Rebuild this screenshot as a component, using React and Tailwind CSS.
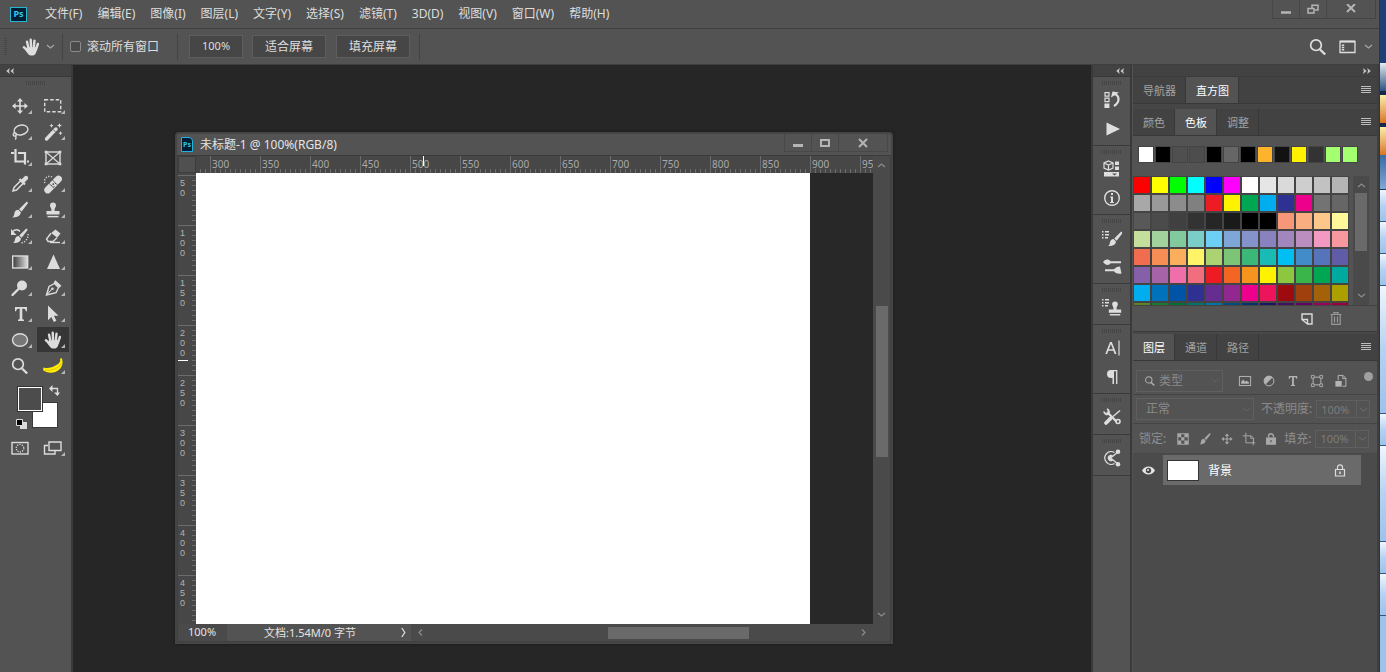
import React from "react";

const MENUS = ["文件(F)", "编辑(E)", "图像(I)", "图层(L)", "文字(Y)", "选择(S)", "滤镜(T)", "3D(D)", "视图(V)", "窗口(W)", "帮助(H)"];

const RECENT = ["#ffffff", "#000000", "#4f4f4f", "#4d4d4d", "#000000", "#666666", "#000000", "#fdb32b", "#121212", "#fff200", "#333333", "#a3ff70", "#a3ff70"];

const SWATCHES = [
  "ff0000 ffff00 00ff00 00ffff 0000ff ff00ff ffffff e6e6e6 dadada cecece c2c2c2 b5b5b5",
  "a8a8a8 999999 8c8c8c 808080 ed1c24 fff200 00a651 00aeef 2e3192 ec008c 737373 666666",
  "585858 4b4b4b 404040 333333 262626 1a1a1a 000000 000000 f7977a f9ad81 fdc68a fff79a",
  "c4df9b a2d39c 82ca9d 7bcdc8 6ecff6 7ea7d8 8493ca 8882be a187be bc8dbf f49ac2 f6989d",
  "f26c4f f68e55 fbaf5c fff467 acd372 7cc576 3bb878 1abbb4 00bff3 438cca 5574b9 605ca8",
  "855fa8 a763a8 f06ea9 f26d7d ed1c24 f26522 f7941d fff200 8dc73f 39b54a 00a651 00a99d",
  "00aeef 0072bc 0054a6 2e3192 662d91 92278f ec008c ed145b 9e0b0f a0410d a36209 aba000",
  "598527 1a7b30 007236 00746b 0076a3 004b80 003471 1b1464 440e62 630460 9e005d 9e0039",
].flatMap((row) => row.split(" ").map((c) => "#" + c));

const TOP_LABELS = ["300", "350", "400", "450", "500", "550", "600", "650", "700", "750", "800", "850", "900", "950"];
const SIDE_LABELS = ["50", "100", "150", "200", "250", "300", "350", "400", "450"];

function Icon({ children, size = 20, className = "" }) {
  return (
    <svg viewBox="0 0 20 20" width={size} height={size} fill="none" stroke="currentColor" strokeWidth="1.4" className={"shrink-0 " + className} aria-hidden="true">
      {children}
    </svg>
  );
}

const solid = { fill: "currentColor", stroke: "none" };

const Hand = () => (
  <>
    <g strokeWidth="2.4" strokeLinecap="round">
      <path d="M2.8 10.200l3.700 3.300" />
      <path d="M6 4.600l1.500 7" />
      <path d="M9.700 2.600l.4 8" />
      <path d="M13.500 3.700l-.7 7" />
      <path d="M16.900 7l-1.900 5.500" />
    </g>
    <path {...solid} d="M6 10.200h9.700l.3 2.200c-.6 2.800-1.600 5.700-3.800 6H9.500c-2-.3-3.200-2.600-5-5z" />
  </>
);

const Brush = () => (
  <>
    <path {...solid} d="M17.6 2.2c.5.5.4 1 0 1.6l-6 7.8-2.6-2.4 7-7c.5-.4 1.1-.5 1.600 0z" />
    <path {...solid} d="M8.200 9.800l2.500 2.300c.3 3-2.500 5.600-8.500 5.400 2-1 1.700-2.600 2.300-4.700.5-1.800 1.900-3 3.700-3z" />
  </>
);

const Stamp = () => (
  <>
    <path {...solid} d="M10 2.500a3 3 0 0 1 3 3c0 1.700-1.400 2.500-1.400 4.200v1.300h4.900v3.500h-13V11h4.900V9.700C8.400 8 7 7.200 7 5.500a3 3 0 0 1 3-3z" />
    <path d="M4.500 16.600h11" strokeWidth="1.500" />
  </>
);

const Move = () => (
  <>
    <path d="M10 4v12M4 10h12" strokeWidth="1.600" />
    <path {...solid} d="M10 2l3 3.600H7zM10 18l3-3.600H7zM2 10l3.600-3v6zM18 10l-3.600-3v6z" />
  </>
);

const Search = () => (
  <>
    <circle cx="8" cy="8.200" r="5.300" strokeWidth="1.700" />
    <path d="M12 12.500l5.200 5" strokeWidth="2.400" />
  </>
);

const Type = () => <path {...solid} d="M4 3h12v4.200h-1.100c-.3-1.700-.9-2.500-2.300-2.500h-1.300v9.900c0 .8.5 1 1.700 1.100V17H7v-1.300c1.200-.1 1.700-.3 1.700-1.100V4.700H7.400c-1.400 0-2 .8-2.300 2.500H4z" />;

const TOOLS = [
  ["移动", <Move />],
  ["选框", <rect x="1.700" y="3.700" width="16" height="12" strokeDasharray="3.500 2" />],
  ["套索", <><ellipse cx="11" cy="8" rx="7" ry="4.800" transform="rotate(-12 11 8)" /><circle cx="4.800" cy="12.500" r="1.600" /><path d="M4.800 13.500c1.500 1 1.600 2.700.4 4" /></>],
  ["魔棒", <><path d="M3.500 17L13 7" strokeWidth="3.400" strokeLinecap="round" /><path d="M10.300 7.700l2 2" stroke="#535353" strokeWidth="1" /><path {...solid} d="M8.500 1.500l.6 1.600 1.600.6-1.600.6-.6 1.600-.6-1.600-1.600-.6 1.600-.6zM16.500 1l.7 1.800 1.800.7-1.800.7-.7 1.800-.7-1.800-1.800-.7 1.800-.7zM17.500 9l.6 1.600 1.600.6-1.600.6-.6 1.700-.6-1.700-1.600-.6 1.600-.6z" /></>],
  ["裁剪", <><path d="M5.500 1v12.500H16M8 5h7v11.500" strokeWidth="2.200" /><path d="M1 5h3M17 13.500h2" strokeWidth="2.200" /></>],
  ["画框", <><rect x="3" y="4" width="14" height="12" /><path d="M3 4l14 12M17 4L3 16" strokeWidth="1.100" /><path {...solid} d="M1.700 2.700h2.600v2.600H1.700zM15.700 2.700h2.600v2.600h-2.600zM1.700 14.700h2.600v2.600H1.700zM15.700 14.700h2.600v2.600h-2.600z" /></>],
  ["吸管", <><path d="M11.500 6L4 13.500 3 17l3.500-1L14 8.500" strokeWidth="1.500" /><path d="M9.500 5l5.500 5.500" strokeWidth="2.200" /><path d="M13 7l3-3" strokeWidth="4.200" strokeLinecap="round" /></>],
  ["修复画笔", <><path d="M4.700 16L15.500 5" strokeWidth="6.800" strokeLinecap="round" /><path stroke="#535353" strokeWidth=".9" d="M5.500 8.800l6 6M9 5.600l6 6" /><path fill="#535353" stroke="none" d="M9.500 9.300h1.600v1.600H9.500zM12 9h1v1h-1zM8 11h1v1H8zM10.500 12h1v1h-1z" /><path d="M1.800 9A5 5 0 0 1 9 3" strokeDasharray="1.200 1.500" /></>],
  ["画笔", <Brush />],
  ["仿制图章", <Stamp />],
  ["历史记录画笔", <><g transform="translate(1 1) scale(.92)"><Brush /></g><path d="M2.500 5.500c3-2.500 6-2 7.500 0" /><path {...solid} d="M1 3v6h5.500z" /><path d="M18 8c.5 4-2 8-7 9" strokeDasharray="1.200 1.500" /></>],
  ["橡皮擦", <><path {...solid} d="M12.500 3.500l5 4-3.300 4.300-6-4.800z" /><path d="M8 7.200L3.500 13l1.600 2.500h5L14 11.800" /><path d="M7 16.500h10" /></>],
  ["渐变", <><defs><linearGradient id="ramp"><stop offset="0" stopColor="#3a3a3a" /><stop offset="1" stopColor="#e0e0e0" /></linearGradient></defs><rect x="2.700" y="4" width="15" height="12" fill="url(#ramp)" /></>],
  ["锐化", <path {...solid} d="M10.500 2.500L17 17H4z" />],
  ["减淡", <><circle cx="12" cy="7.500" r="5" fill="currentColor" stroke="none" /><path d="M8.500 11L2.500 17" strokeWidth="2.400" strokeLinecap="round" /></>],
  ["钢笔", <><path d="M3.500 17L6 8.500l5.500-3 4 4-2.500 5.200z" /><path d="M3.500 17l5-5.500" strokeWidth="1.100" /><circle cx="9.400" cy="10.800" r="1.300" fill="currentColor" stroke="none" /><path d="M11.500 3.200l6 5.600" strokeWidth="2.600" /></>],
  ["文字", <g transform="translate(1 0)"><Type /></g>],
  ["选择", <path {...solid} d="M5 1.500l10.500 10.300h-4.600l2.500 5-2.600 1.300-2.400-5L5 16.300z" />],
  ["椭圆", <ellipse cx="10" cy="10" rx="7.500" ry="6.300" fill="#777" />],
  ["抓手", <Hand />],
  ["缩放", <Search />],
  ["香蕉", <><path fill="#ffee00" stroke="none" d="M17 2.500l2-.2.600 4.200c-.6 6.200-5.200 10-11.600 10.200-3 .1-6-.9-8-2.700l.5-2.500c2.200.8 5.200.8 8.200-.2C12.500 10 16.800 7.500 17.300 4.500z" /><path stroke="#c9a800" strokeWidth=".6" d="M2 14c6 1.200 13-1 16.500-7" /></>],
];

function Tool({ name, children, active, plain }) {
  return (
    <button aria-label={name} className={"relative flex h-[25px] items-center justify-center text-[#dcdcdc] " + (active ? "bg-[#363636]" : "")}>
      <Icon>{children}</Icon>
      {!plain && (
        <svg className="absolute right-1 bottom-1" width="4" height="4" aria-hidden="true">
          <path d="M4 0v4H0z" fill="#b8b8b8" />
        </svg>
      )}
    </button>
  );
}

function Grip() {
  return <div className="mx-auto h-[4px] w-[20px] bg-[repeating-linear-gradient(90deg,#454545_0px,#454545_1px,transparent_1px,transparent_2px)]" />;
}

function DoubleArrow({ right }) {
  return (
    <svg width="8" height="6" viewBox="0 0 8 6" fill="#c8c8c8" aria-hidden="true">
      {right ? <path d="M0 0l3.600 3L0 6l.8-3zM4.200 0l3.600 3-3.600 3 .8-3z" /> : <path d="M3.800 0L.2 3l3.600 3L3 3zM8 0L4.400 3 8 6l-.8-3z" />}
    </svg>
  );
}

function Chevron({ dir = "down", className = "" }) {
  const d = { down: "M1 3l3.500 3L8 3", up: "M1 6l3.500-3L8 6", left: "M6 1.500L3 4.500l3 3", right: "M3 1.500l3 3-3 3" }[dir];
  return (
    <svg width="9" height="9" viewBox="0 0 9 9" fill="none" stroke="currentColor" strokeWidth="1.200" className={"shrink-0 " + className} aria-hidden="true">
      <path d={d} />
    </svg>
  );
}

function Tabs({ items, active }) {
  return (
    <div className="flex h-[27px] shrink-0 items-stretch border-b border-[#383838] bg-[#424242]" role="tablist">
      {items.map((t, i) => (
        <button key={t} role="tab" aria-selected={i === active} className={"border-r border-[#383838] pt-[2px] pr-[9px] pl-[10px] text-[11px] " + (i === active ? "bg-[#535353] text-white" : "text-[#a3a3a3]")}>
          {t}
        </button>
      ))}
      <button aria-label="面板菜单" className="mr-[6px] ml-auto">
        <svg width="10" height="8" fill="#bdbdbd" aria-hidden="true">
          <path d="M0 0h10v1H0zM0 2h10v1H0zM0 4h10v1H0zM0 6h10v1H0z" />
        </svg>
      </button>
    </div>
  );
}

const DOCK = [
  [
    ["历史记录", <><path strokeWidth="1.200" d="M3 2.600h4v3.500H3zM3 8.200h4v3.500H3z" /><path {...solid} d="M2.400 13.500h5v4.500h-5z" /><path d="M12 4c5.500 1 6.500 8 0 12" strokeWidth="2.200" /><path {...solid} d="M9 7.500L10.500 1.500l6.500 1z" /></>],
    ["动作", <path {...solid} d="M4.500 3.500L18 10 4.500 16.500z" />],
  ],
  [
    ["3D", <><path strokeWidth="1.200" d="M6.500 2l4.500 2v5l-4.500 2L2 9V4zM2 4l4.500 2L11 4M6.500 6v5" /><path {...solid} d="M13 2.500h4v3.500h-4zM13 7.500h4V11h-4zM2 13h15v4.500H2z" /><path d="M10 14.500h5l-2.500 2z" fill="#535353" stroke="none" /></>],
    ["信息", <><circle cx="10" cy="10" r="7.300" /><path {...solid} d="M9 5h2v2H9zM8 8.500h3V14h1v1H8v-1h1V9.500H8z" /></>],
  ],
  [
    ["画笔设置", <><g transform="translate(4 2) scale(.92)"><Brush /></g><path {...solid} d="M0 3h1.500v1.500H0zM3 3h4v1.500H3zM0 6h1.500v1.500H0zM3 6h4v1.500H3zM0 9h1.500v1.500H0zM3 9h3v1.500H3z" /></>],
    ["画笔", <><path {...solid} d="M1 5C3.500 1.500 7 2 8.500 4.200H19v2H8.500C7 8.800 3.500 8.500 1 5z" /><path {...solid} d="M3 12.200h9c2-2 4-2.700 6-2.700l1.500 7c-3 .5-5.500 0-7.500-2.300H3z" /></>],
  ],
  [["仿制源", <><g transform="translate(3.500 2) scale(.95)"><Stamp /></g><path {...solid} d="M0 2h1.500v1.500H0zM3 2h4v1.500H3zM0 5h1.500v1.500H0zM3 5h4v1.500H3zM0 8h1.500v1.500H0zM3 8h3v1.500H3z" /></>]],
  [
    ["字符", <><path {...solid} d="M8 4h1.800l4.700 12h-1.900l-1.200-3.200H6.300L5.100 16H3.300zm.9 2L6.900 11.300h4z" /><path d="M17 2.500v15" strokeWidth="1.200" /></>],
    ["段落", <><path {...solid} d="M9 3h3v14h-1.500v-6H9a4 4 0 0 1 0-8z" /><path d="M14.700 17V3M9 3.600h6.400" strokeWidth="1.300" /></>],
  ],
  [["工具预设", <><path d="M5 5l9.500 9.500" strokeWidth="2.300" /><path d="M2 4.500A3.200 3.200 0 0 0 6.500 7 3.200 3.200 0 0 0 5 2.200" strokeWidth="1.800" /><circle cx="16" cy="14.500" r="2" strokeWidth="1.600" /><path d="M18 3.500l-7 6" strokeWidth="1.500" /><path d="M8.500 11.500L4 16" strokeWidth="3.800" strokeLinecap="round" /></>]],
  [["学习", <><path d="M12.500 4.500A6.400 6.400 0 1 0 12.500 15.500" /><path {...solid} d="M11 7.500a3.200 3.200 0 1 0 0 5L8.500 10z" /><path d="M8.500 10L16 4M8.500 10L16 16" /><circle cx="16" cy="3.700" r="2.300" {...solid} /><circle cx="16" cy="16.300" r="2.300" {...solid} /></>]],
];

function Caption({ label, children, wide }) {
  return (
    <button aria-label={label} className={"flex h-full items-center justify-center border-l border-[#484848] text-[#b5b5b5] " + (wide ? "w-[49px]" : "w-[27px]")}>
      <svg width="12" height="10" viewBox="0 0 12 10" fill="none" stroke="currentColor" strokeWidth="2" aria-hidden="true">
        {children}
      </svg>
    </button>
  );
}

function PsBadge({ doc }) {
  return (
    <span className={"flex shrink-0 items-center justify-center border bg-[#001d33] font-bold text-[#31c5f0] " + (doc ? "h-[15px] w-[12px] rounded-tr-sm border-[#20b4df] text-[7px]" : "h-[15px] w-[17px] border-[#2ab5cf] text-[9px]")}>
      Ps
    </span>
  );
}

function DocumentWindow() {
  return (
    <section className="absolute top-[67px] left-[102px] flex h-[512px] w-[718px] flex-col rounded-t-sm border-2 border-[#454545] bg-[#535353] shadow-[0_0_3px_#1a1a1a]">
      <header className="flex h-[22px] shrink-0 items-center border-b border-[#3a3a3a] pl-[4px]">
        <PsBadge doc />
        <h1 className="ml-[7px] text-xs text-[#e4e4e4]">未标题-1 @ 100%(RGB/8)</h1>
        <div className="mr-[3px] ml-auto flex h-[18px] self-start border-r border-b border-[#484848]">
          <Caption label="最小化"><path d="M1 7.500h10" strokeWidth="3" /></Caption>
          <Caption label="最大化"><path d="M2 2h8v6H2z" /></Caption>
          <Caption label="关闭" wide><path d="M2 1l8 8M10 1L2 9" /></Caption>
        </div>
      </header>

      <div className="flex min-h-0 flex-1 border-x border-[#404040]">
        <div className="flex min-w-0 flex-1 flex-col">
          <div className="flex h-[17px] shrink-0 bg-[#474747]">
            <div className="w-[18px] shrink-0 border border-[#3d3d3d] bg-[#505050]" />
            <div className="relative flex min-w-0 flex-1 overflow-hidden text-[10px] leading-[17px] text-[#a9a9a9]">
              <div className="w-[14px] shrink-0 bg-[repeating-linear-gradient(270deg,transparent_0px,transparent_4px,#6c6c6c_4px,#6c6c6c_5px)] bg-[length:100%_4px] bg-bottom bg-no-repeat" />
              {TOP_LABELS.map((n) => (
                <div key={n} className="w-[50px] shrink-0 border-l border-[#6c6c6c] bg-[repeating-linear-gradient(90deg,transparent_0px,transparent_4px,#6c6c6c_4px,#6c6c6c_5px)] bg-[length:100%_4px] bg-bottom bg-no-repeat pl-px">
                  {n}
                </div>
              ))}
              <div className="absolute top-0 left-[227px] h-[10px] w-px bg-white" />
            </div>
          </div>
          <div className="flex min-h-0 flex-1">
            <div className="relative w-[18px] shrink-0 overflow-hidden bg-[#474747] font-['Liberation_Sans',sans-serif] text-[9px] leading-[10px] text-[#b4b4b4]">
              <div className="h-[2px]" />
              {SIDE_LABELS.map((n) => (
                <div key={n} className="flex h-[50px] w-full flex-col border-t border-[#6c6c6c] bg-[repeating-linear-gradient(180deg,transparent_0px,transparent_4px,#6c6c6c_4px,#6c6c6c_5px)] bg-[length:4px_100%] bg-right bg-no-repeat pt-[2px] pl-[2px]">
                  {n.split("").map((d, i) => (
                    <span key={i}>{d}</span>
                  ))}
                </div>
              ))}
              <div className="absolute top-[187px] left-0 h-px w-[10px] bg-white" />
            </div>
            <div className="flex min-w-0 flex-1 bg-[#282828]">
              <div className="w-[614px] bg-white" />
            </div>
          </div>
        </div>
        <div className="flex w-[17px] shrink-0 flex-col items-center bg-[#4a4a4a] pt-[5px] pb-[5px] text-[#8c8c8c]">
          <Chevron dir="up" />
          <div className="mt-[136px] h-[151px] w-[12px] bg-[#6a6a6a]" />
          <Chevron className="mt-auto" />
        </div>
      </div>

      <footer className="flex h-[18px] shrink-0 items-center border-x border-b border-[#404040] bg-[#4a4a4a] text-[11px] text-[#e4e4e4]">
        <span className="w-[49px] pl-[10px]">100%</span>
        <button className="flex h-full w-[184px] items-center bg-[#535353] pr-[5px] pl-[37px]">
          <span className="leading-4">文档:1.54M/0 字节</span>
          <svg className="ml-auto" width="5" height="11" fill="none" stroke="#dcdcdc" strokeWidth="1.300" aria-hidden="true"><path d="M.8 1l3 4.500-3 4.500" /></svg>
        </button>
        <div className="flex h-full flex-1 items-center pl-[5px] text-[#8c8c8c]">
          <Chevron dir="left" />
          <div className="ml-[183px] h-[12px] w-[141px] bg-[#6a6a6a]" />
          <Chevron dir="right" className="mr-[22px] ml-auto" />
        </div>
      </footer>
    </section>
  );
}

function PercentField({ id, label }) {
  return (
    <>
      <label htmlFor={id} className="shrink-0">{label}</label>
      <div className="ml-[4px] flex h-[18px] items-center border border-[#5f5f5f]">
        <input id={id} defaultValue="100%" className="h-full w-[39px] bg-transparent pl-[4px] text-[11px] text-[#7c7c7c] outline-none" />
        <button aria-label="调整数值" className="flex h-full w-[13px] items-center justify-center border-l border-[#5f5f5f] text-[#666]">
          <Chevron />
        </button>
      </div>
    </>
  );
}

const FILTERS = [
  ["像素", <><rect x="2" y="3.500" width="16" height="13" /><path {...solid} d="M4.500 14V11l3-3 2.500 3 2-1.500 3.500 2V14z" /></>],
  ["调整图层", <><circle cx="10" cy="10" r="7" /><path {...solid} d="M15 5L5 15a7 7 0 0 1 0-10 7 7 0 0 1 10 0z" /></>],
  ["文字图层", <Type />],
  ["形状", <><path d="M4.500 4.500h11v11h-11z" /><path fill="#535353" strokeWidth="1.200" d="M2 2h4v4H2zM14 2h4v4h-4zM2 14h4v4H2zM14 14h4v4h-4z" /></>],
  ["智能对象", <><path d="M6 9V2h7l4 4v11.500h-5M12.500 2v4.500H17" /><path {...solid} d="M2 10h9v8H2z" /></>],
];

const LOCKS = [
  ["锁定透明像素", <><rect x="2.500" y="2.500" width="15" height="15" /><path {...solid} d="M3 3h4.500v4.500H3zM12 3h5v4.500h-5zM7.500 7.500H12V12H7.500zM3 12h4.500v5H3zM12 12h5v5h-5z" /></>],
  ["锁定图像像素", <Brush />],
  ["锁定位置", <Move />],
  ["锁定画板", <><path d="M5.500 1v4M1 5.500h12l3.500 3v7H5.500v-10M16 13v6M19 15.500h-3" /><path d="M12.500 5.500v3.500H16" /></>],
  ["锁定全部", <><rect x="3.500" y="8.500" width="13" height="9" fill="currentColor" /><path d="M6.500 8V6a3.500 3.500 0 0 1 7 0v2" strokeWidth="1.900" /><path d="M10 11.500v3" stroke="#535353" strokeWidth="1.600" /></>],
];

export default function App() {
  return (
    <div className="flex h-screen overflow-hidden bg-[#535353] font-['Noto_Sans','Noto_Sans_CJK_SC',sans-serif] text-xs text-[#dedede]">
      <div className="flex min-w-0 flex-1 flex-col">
        <header className="flex h-[28px] shrink-0 items-center pl-[10px]">
          <PsBadge />
          <nav className="ml-[18px] flex items-center gap-[15px]">
            {MENUS.map((m) => (
              <button key={m} className="text-xs whitespace-nowrap">{m}</button>
            ))}
          </nav>
          <div className="mr-[3px] ml-auto flex h-[19px] self-start border-r border-b border-[#444]">
            <Caption label="最小化"><path d="M1 8.500h10" strokeWidth="2.500" /></Caption>
            <Caption label="还原"><path d="M5 4V1.200h6V6H8M1 4.500h6V9H1z" strokeWidth="1.500" /></Caption>
            <Caption label="关闭" wide><path d="M2 0l8 8M10 0L2 8" /></Caption>
          </div>
        </header>

        <div className="flex h-[37px] shrink-0 items-center border-y border-[#3f3f3f]">
          <div className="ml-[4px] h-[18px] w-[3px] bg-[repeating-linear-gradient(180deg,#454545_0px,#454545_1px,transparent_1px,transparent_2px)]" />
          <button aria-label="抓手工具" className="ml-[14px] flex items-center gap-[5px]">
            <Icon><Hand /></Icon>
            <Chevron className="text-[#a8a8a8]" />
          </button>
          <div className="ml-[7px] h-[26px] w-px bg-[#434343]" />
          <label className="ml-[7px] flex items-center gap-[6px]">
            <input type="checkbox" className="size-[11px] appearance-none rounded-[2px] border border-[#8b8b8b] bg-[#4a4a4a]" />
            滚动所有窗口
          </label>
          <div className="ml-[18px] h-[26px] w-px bg-[#434343]" />
          <button className="ml-[11px] h-[23px] w-[54px] border border-[#5e5e5e] bg-[#464646] text-[11px]">100%</button>
          <button className="ml-[9px] h-[23px] w-[74px] border border-[#5e5e5e] bg-[#464646]">适合屏幕</button>
          <button className="ml-[10px] h-[23px] w-[74px] border border-[#5e5e5e] bg-[#464646]">填充屏幕</button>
          <div className="ml-[9px] h-[26px] w-px bg-[#434343]" />
          <div className="mr-[6px] ml-auto flex items-center">
            <button aria-label="搜索"><Icon><Search /></Icon></button>
            <button aria-label="工作区" className="ml-[11px] flex items-center gap-[8px]">
              <svg width="17" height="14" fill="none" stroke="currentColor" strokeWidth="1.300" aria-hidden="true">
                <path d="M1 1.500h15v11H1z" />
                <path d="M1 1.500h15" strokeWidth="2" />
                <path d="M4 4.500v6" strokeWidth="2.400" strokeDasharray="1.500 .8" />
              </svg>
              <Chevron className="text-[#a8a8a8]" />
            </button>
          </div>
        </div>

        <div className="flex min-h-0 flex-1">
          <aside className="flex w-[73px] shrink-0 flex-col border-r-2 border-[#3a3a3a]">
            <button aria-label="折叠工具栏" className="flex h-[12px] w-full items-center border-b border-[#383838] bg-[#424242] pl-[6px]">
              <DoubleArrow />
            </button>
            <div className="pt-[4px]"><Grip /></div>
            <div className="mt-[8px] mr-[2px] ml-[4px] grid grid-cols-2 gap-x-px gap-y-px">
              {TOOLS.map(([name, art]) => (
                <Tool key={name} name={name} active={name === "抓手"} plain={name === "画框" || name === "缩放"}>{art}</Tool>
              ))}
            </div>
            <div className="relative mt-[8px] ml-[16px] h-[43px] w-[44px]">
              <button aria-label="背景色" className="absolute top-[16px] left-[16px] size-[26px] border border-[#3a3a3a] bg-white" />
              <button aria-label="前景色" className="absolute top-0 left-px size-[26px] border border-[#333] bg-[#4c4c4c] inset-ring inset-ring-white" />
              <button aria-label="切换颜色" className="absolute -top-px left-[33px]">
                <svg width="11" height="11" fill="none" stroke="#dcdcdc" strokeWidth="1.300" aria-hidden="true"><path d="M2 3.500h6.500V9" /><path d="M3.500 0v7L0 3.500zM5 7.500h6L8.500 11z" fill="#dcdcdc" stroke="none" /></svg>
              </button>
              <button aria-label="默认颜色" className="absolute top-[33px] left-0">
                <svg width="11" height="10" aria-hidden="true"><path d="M4 3h7v7H4z" fill="#dcdcdc" /><path d="M.5.500h6v6h-6z" fill="#000" stroke="#dcdcdc" /></svg>
              </button>
            </div>
            <div className="mt-[6px] mr-[2px] ml-[4px] grid grid-cols-2 gap-x-px">
              <Tool name="快速蒙版" plain><rect x="2" y="4.500" width="16" height="11.500" /><circle cx="10" cy="10.200" r="3.800" strokeDasharray="1.200 1.200" strokeWidth="1.300" /></Tool>
              <Tool name="屏幕模式"><path d="M6 4h12v8.500H6zM5 7.500H1.500V16H12v-3" /></Tool>
            </div>
          </aside>

          <main className="relative min-w-0 flex-1 overflow-hidden bg-[#262626]">
            <DocumentWindow />
          </main>

          <aside className="flex w-[41px] shrink-0 flex-col border-x-2 border-[#3a3a3a]">
            <button aria-label="展开面板" className="flex h-[12px] w-full items-center justify-end border-b border-[#383838] bg-[#424242] pr-[6px]">
              <DoubleArrow />
            </button>
            {DOCK.map((group, i) => (
              <div key={i} className="min-h-[41px] border-b border-[#3a3a3a] pt-[4px] pb-[2px]">
                <Grip />
                {group.map(([name, art]) => (
                  <button key={name} aria-label={name} className="flex h-[29px] w-full items-center justify-center">
                    <Icon>{art}</Icon>
                  </button>
                ))}
              </div>
            ))}
          </aside>

          <aside className="flex w-[247px] shrink-0 flex-col border-r-2 border-[#3f3f3f] pl-px">
            <button aria-label="折叠面板" className="flex h-[12px] w-full shrink-0 items-center justify-end border-b border-[#3c3c3c] bg-[#424242] pr-[6px]">
              <DoubleArrow right />
            </button>
            <Tabs items={["导航器", "直方图"]} active={1} />
            <div className="h-[5px] shrink-0 bg-[#464646]" />
            <Tabs items={["颜色", "色板", "调整"]} active={1} />

            <div className="flex gap-px pt-[10px] pl-[5px]">
              {RECENT.map((c, i) => (
                <button key={i} aria-label={"最近使用 " + c} className="h-[17px] w-[16px] border border-[#444]" style={{ backgroundColor: c }} />
              ))}
            </div>
            <div className="mt-[13px] flex h-[130px] shrink-0 border-b border-[#424242]">
              <div className="grid shrink-0 auto-rows-[18px] grid-cols-[repeat(12,18px)] overflow-hidden">
                {SWATCHES.map((c, i) => (
                  <button key={i} aria-label={"色板 " + c} className="border border-[#444]" style={{ backgroundColor: c }} />
                ))}
              </div>
              <div className="ml-[4px] flex w-[16px] flex-col items-center bg-[#4a4a4a] py-[5px] text-[#8c8c8c]">
                <Chevron dir="up" />
                <div className="mt-[3px] h-[58px] w-[12px] bg-[#6a6a6a]" />
                <Chevron className="mt-auto" />
              </div>
            </div>
            <div className="flex h-[25px] shrink-0 items-center justify-end gap-[17px] pr-[35px]">
              <button aria-label="新建色板"><svg width="12" height="12" fill="none" stroke="#dcdcdc" strokeWidth="1.400" aria-hidden="true"><path d="M1 1h10v10H6.500L1 6.500z" /><path d="M6.500 11V6.500H1" /></svg></button>
              <button aria-label="删除色板"><svg width="12" height="13" fill="none" stroke="#9a9a9a" strokeWidth="1.200" aria-hidden="true"><path d="M.5 2.500h11M4 2.500V.700h4v1.800M1.800 3v9.300h8.400V3M4.500 4.500v6M7.500 4.500v6" /></svg></button>
            </div>
            <div className="h-[3px] shrink-0 border-t border-[#3a3a3a] bg-[#484848]" />

            <Tabs items={["图层", "通道", "路径"]} active={0} />
            <div className="flex h-[34px] shrink-0 items-center border-b border-[#444] pt-[6px] pl-[3px]">
              <div className="flex h-[22px] w-[87px] items-center border border-[#5f5f5f] pr-[2px] pl-[7px] text-[#8a8a8a]">
                <Icon size={12} className="text-[#b0b0b0]"><Search /></Icon>
                <select aria-label="图层过滤" className="ml-[3px] min-w-0 flex-1 appearance-none bg-transparent text-xs outline-none"><option>类型</option></select>
                <Chevron className="text-[#5e5e5e]" />
              </div>
              <div className="ml-[15px] flex gap-[10px] text-[#b4b4b4]">
                {FILTERS.map(([name, art]) => (
                  <button key={name} aria-label={name}><Icon size={14}>{art}</Icon></button>
                ))}
              </div>
              <button aria-label="过滤开关" className="mr-[4px] mb-[8px] ml-auto size-[9px] rounded-full bg-[#a0a0a0]" />
            </div>
            <div className="flex h-[29px] shrink-0 items-center border-b border-[#444] pl-[3px] text-[#8a8a8a]">
              <div className="mr-[7px] flex h-[22px] w-[118px] items-center border border-[#5f5f5f] pr-[2px] pl-[9px]">
                <select aria-label="混合模式" className="min-w-0 flex-1 appearance-none bg-transparent text-xs outline-none"><option>正常</option></select>
                <Chevron className="text-[#5e5e5e]" />
              </div>
              <PercentField id="opacity" label="不透明度:" />
            </div>
            <div className="flex h-[30px] shrink-0 items-center border-b border-[#484848] pl-[6px] text-[#8f8f8f]">
              <span>锁定:</span>
              <div className="mr-[6px] ml-[10px] flex gap-[8px] text-[#a8a8a8]">
                {LOCKS.map(([name, art]) => (
                  <button key={name} aria-label={name}><Icon size={14}>{art}</Icon></button>
                ))}
              </div>
              <PercentField id="fill" label="填充:" />
            </div>

            <div className="flex flex-1 flex-col bg-[#4b4b4b] pt-px pr-[16px]">
              <div className="flex h-[30px] items-center">
                <button aria-label="显示图层" className="flex w-[30px] justify-center text-white">
                  <svg width="13" height="9" viewBox="0 0 13 9" aria-hidden="true">
                    <path d="M0 4.500C3-.8 10-.8 13 4.500 10 9.800 3 9.800 0 4.500z" fill="#e6e6e6" />
                    <circle cx="6.500" cy="4.500" r="2.700" fill="#4b4b4b" />
                    <circle cx="6" cy="4" r="1" fill="#e6e6e6" />
                  </svg>
                </button>
                <button className="flex h-full flex-1 items-center bg-[#6a6a6a] pr-[15px] pl-[4px] text-white">
                  <span className="h-[21px] w-[32px] border border-[#333] bg-white" />
                  <span className="ml-[9px] pt-[2px]">背景</span>
                  <svg className="ml-auto" width="12" height="13" fill="none" stroke="#dcdcdc" strokeWidth="1.200" aria-hidden="true"><path d="M1.500 5.500h9v6.500h-9zM3.500 5.500V3.300a2.500 2.500 0 0 1 5 0v2.200" /><path d="M6 7.500v2.500" strokeWidth="1.600" /></svg>
                </button>
              </div>
            </div>
          </aside>
        </div>
      </div>

      <div className="flex w-[7px] shrink-0 flex-col border-l border-[#26364c] bg-[#9cc3ea]">
        <div className="h-[63px] bg-[#1d4075]" />
        <div className="h-[28px] bg-linear-to-b from-[#e8ecf3] to-[#2c5480]" />
        <div className="h-[4px] bg-[#16294a]" />
        <div className="h-[28px] bg-linear-to-b from-[#f7efa8] to-[#d8741c]" />
        <div className="h-[4px] bg-[#16294a]" />
        <div className="h-[28px] bg-linear-to-b from-[#f7efa8] to-[#d8741c]" />
        <div className="h-[35px] border-b border-[#1d3557] bg-linear-to-b from-[#3a6ba5] to-[#7ea8d6]" />
        {[32, 32, 32, 128, 32, 96, 32, 42].map((h, i) => (
          <div key={i} className="border-b border-[#33557f] bg-linear-to-b from-[#f0f6fd] via-[#b5d2f2] to-[#9cc3ea]" style={{ height: h }} />
        ))}
      </div>
    </div>
  );
}
